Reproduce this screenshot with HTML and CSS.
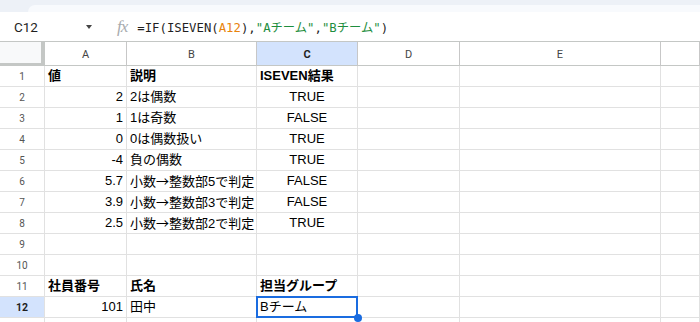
FILE: index.html
```
<!DOCTYPE html>
<html>
  <head>
    <meta charset="utf-8">
    <title>ISEVEN</title>
    <link rel="stylesheet" href="styles.css">
  </head>
  <body>
    <div class="top-strip"><div class="top-tab"></div></div>
    <div class="formula-bar">
      <span class="name-box">C12</span>
      <span class="name-arrow"></span>
      <span class="fx">fx</span>
      <span class="formula">=IF(ISEVEN(<span class="ref">A12</span>),<span class="str">"Aチーム"</span>,<span class="str">"Bチーム"</span>)</span>
    </div>
    <div class="sheet">
      <div class="hd corner"></div>
      <div class="hd">A</div>
      <div class="hd">B</div>
      <div class="hd sel">C</div>
      <div class="hd">D</div>
      <div class="hd">E</div>
      <div class="hd"></div>

      <div class="rn">1</div><div class="c b">値</div><div class="c b">説明</div><div class="c b">ISEVEN結果</div><div class="c"></div><div class="c"></div><div class="c"></div>
      <div class="rn">2</div><div class="c r">2</div><div class="c">2は偶数</div><div class="c m">TRUE</div><div class="c"></div><div class="c"></div><div class="c"></div>
      <div class="rn">3</div><div class="c r">1</div><div class="c">1は奇数</div><div class="c m">FALSE</div><div class="c"></div><div class="c"></div><div class="c"></div>
      <div class="rn">4</div><div class="c r">0</div><div class="c">0は偶数扱い</div><div class="c m">TRUE</div><div class="c"></div><div class="c"></div><div class="c"></div>
      <div class="rn">5</div><div class="c r">-4</div><div class="c">負の偶数</div><div class="c m">TRUE</div><div class="c"></div><div class="c"></div><div class="c"></div>
      <div class="rn">6</div><div class="c r">5.7</div><div class="c">小数<span class="arrow">→</span>整数部5で判定</div><div class="c m">FALSE</div><div class="c"></div><div class="c"></div><div class="c"></div>
      <div class="rn">7</div><div class="c r">3.9</div><div class="c">小数<span class="arrow">→</span>整数部3で判定</div><div class="c m">FALSE</div><div class="c"></div><div class="c"></div><div class="c"></div>
      <div class="rn">8</div><div class="c r">2.5</div><div class="c">小数<span class="arrow">→</span>整数部2で判定</div><div class="c m">TRUE</div><div class="c"></div><div class="c"></div><div class="c"></div>
      <div class="rn">9</div><div class="c"></div><div class="c"></div><div class="c"></div><div class="c"></div><div class="c"></div><div class="c"></div>
      <div class="rn">10</div><div class="c"></div><div class="c"></div><div class="c"></div><div class="c"></div><div class="c"></div><div class="c"></div>
      <div class="rn">11</div><div class="c b">社員番号</div><div class="c b">氏名</div><div class="c b">担当グループ</div><div class="c"></div><div class="c"></div><div class="c"></div>
      <div class="rn sel">12</div><div class="c r">101</div><div class="c">田中</div><div class="c active">Bチーム<span class="handle"></span></div><div class="c"></div><div class="c"></div><div class="c"></div>
      <div class="rn"></div><div class="c"></div><div class="c"></div><div class="c"></div><div class="c"></div><div class="c"></div><div class="c"></div>
    </div>
  </body>
</html>
```

FILE: styles.css
```
html, body {margin: 0; padding: 0; background: #fff; overflow: hidden;}
body {font-family: "Liberation Sans", Arial, "Noto Sans CJK JP", sans-serif; color: #000; height: 322px;}

.top-strip {height: 12px; background: #edf1f7; position: relative;}
.top-tab {position: absolute; left: 28px; right: 0; top: 5px; bottom: 0; background: #f8fafd; border-top-left-radius: 9px;}

.formula-bar {display: flex; align-items: center; border-bottom: 1px solid #c4c7c5; box-sizing: border-box; height: 30px;}
.name-box {font-family: Roboto, "Liberation Sans", sans-serif; font-size: 13.5px; color: #1f1f1f; margin-left: 14px; width: 72px;}
.name-arrow {width: 0; height: 0; border-left: 3.5px solid transparent; border-right: 3.5px solid transparent; border-top: 4px solid #444; margin-top: 1px;}
.fx {font-family: "Liberation Serif", serif; font-style: italic; font-size: 17px; color: #a8abae; margin-left: 25px; letter-spacing: -1px;}
.formula {font-family: "DejaVu Sans Mono", "Noto Sans CJK JP", monospace; font-size: 12.3px; color: #1f1f1f; margin-left: 10px; white-space: pre;}
.formula .ref {color: #e8830c;}
.formula .str {color: #1e8e3e;}

.sheet {display: grid; grid-template-columns: 45px 82px 130px 101px 102px 201px 1fr; grid-template-rows: 24px repeat(13, 21px);}
.sheet > div {box-sizing: border-box; border-right: 1px solid #e1e1e1; border-bottom: 1px solid #e1e1e1; white-space: nowrap; overflow: hidden;}

.hd {font-family: Roboto, "Liberation Sans", sans-serif; font-size: 11px; color: #444; display: flex; align-items: center; justify-content: center; padding-top: 1px; border-right-color: #c7c7c7 !important; border-bottom-color: #c4c7c5 !important;}
.hd.corner {background: #f8f9fa; border-right: 4px solid #c4c7c5 !important; border-bottom: 3px solid #c4c7c5 !important;}
.hd.sel {background: #d3e3fd; font-weight: bold; color: #1f1f1f;}

.rn {font-family: Roboto, "Liberation Sans", sans-serif; font-size: 10px; color: #555; display: flex; align-items: center; justify-content: center;}
.rn.sel {background: #d3e3fd; font-weight: bold; color: #1f1f1f; font-size: 10.5px;}

.c {font-size: 13px; line-height: 20px; padding: 0 3px;}
.c.b {font-weight: bold;}
.c.r {text-align: right;}
.c.m {text-align: center;}
.c .arrow {font-family: "Noto Sans CJK JP", sans-serif;}
.c.active {overflow: visible !important; position: relative;}
.c.active::before {content: ""; position: absolute; left: -1px; top: -1px; right: -1px; bottom: -1px; border: 2px solid #1a6ce0;}
.handle {position: absolute; right: -5px; bottom: -5px; width: 8px; height: 8px; border-radius: 50%; background: #1a6ce0; z-index: 2;}
```
